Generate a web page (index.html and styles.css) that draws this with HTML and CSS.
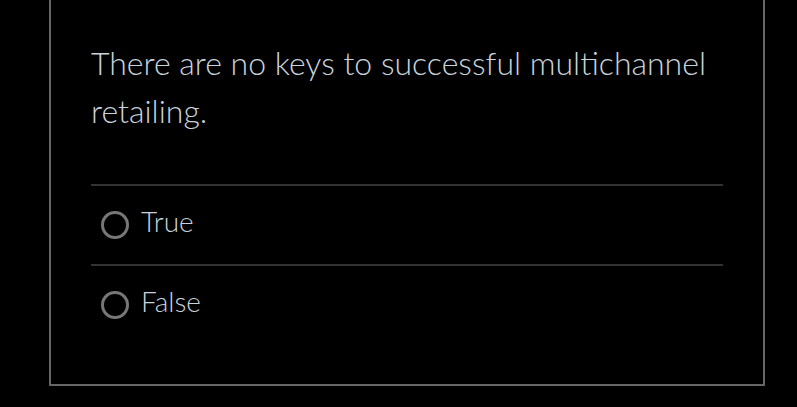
FILE: index.html
```html
<!DOCTYPE html>
<html>
<head>
<meta charset="utf-8">
<link rel="stylesheet" href="styles.css">
</head>
<body>
<div class="card">
  <p class="question">There are no keys to successful multichannel retailing.</p>
  <div class="options">
    <label class="option"><span class="radio"></span><span class="label">True</span></label>
    <label class="option"><span class="radio"></span><span class="label">False</span></label>
  </div>
</div>
</body>
</html>
```

FILE: styles.css
```css
html, body {
  margin: 0;
  padding: 0;
  background: #000;
  overflow: hidden;
}
body {
  font-family: Lato, "Noto Sans", sans-serif;
  color: #c9d3dc;
}
.card {
  box-sizing: border-box;
  margin: -40px 0 0 49px;
  width: 716px;
  border: 2px solid #666;
  padding: 77px 40px 40px 40px;
}
.question {
  margin: 0;
  font-size: 32px;
  line-height: 48px;
  font-weight: 300;
}
.options {
  margin-top: 49px;
}
.option {
  display: flex;
  align-items: center;
  height: 78px;
  border-top: 2px solid #333;
  gap: 12px;
}
.radio {
  width: 22px;
  height: 22px;
  border: 3px solid #777;
  border-radius: 50%;
  margin-left: 10px;
  box-sizing: content-box;
  flex: none;
}
.label {
  font-size: 28px;
  font-weight: 300;
  margin-bottom: 8px;
}
```
